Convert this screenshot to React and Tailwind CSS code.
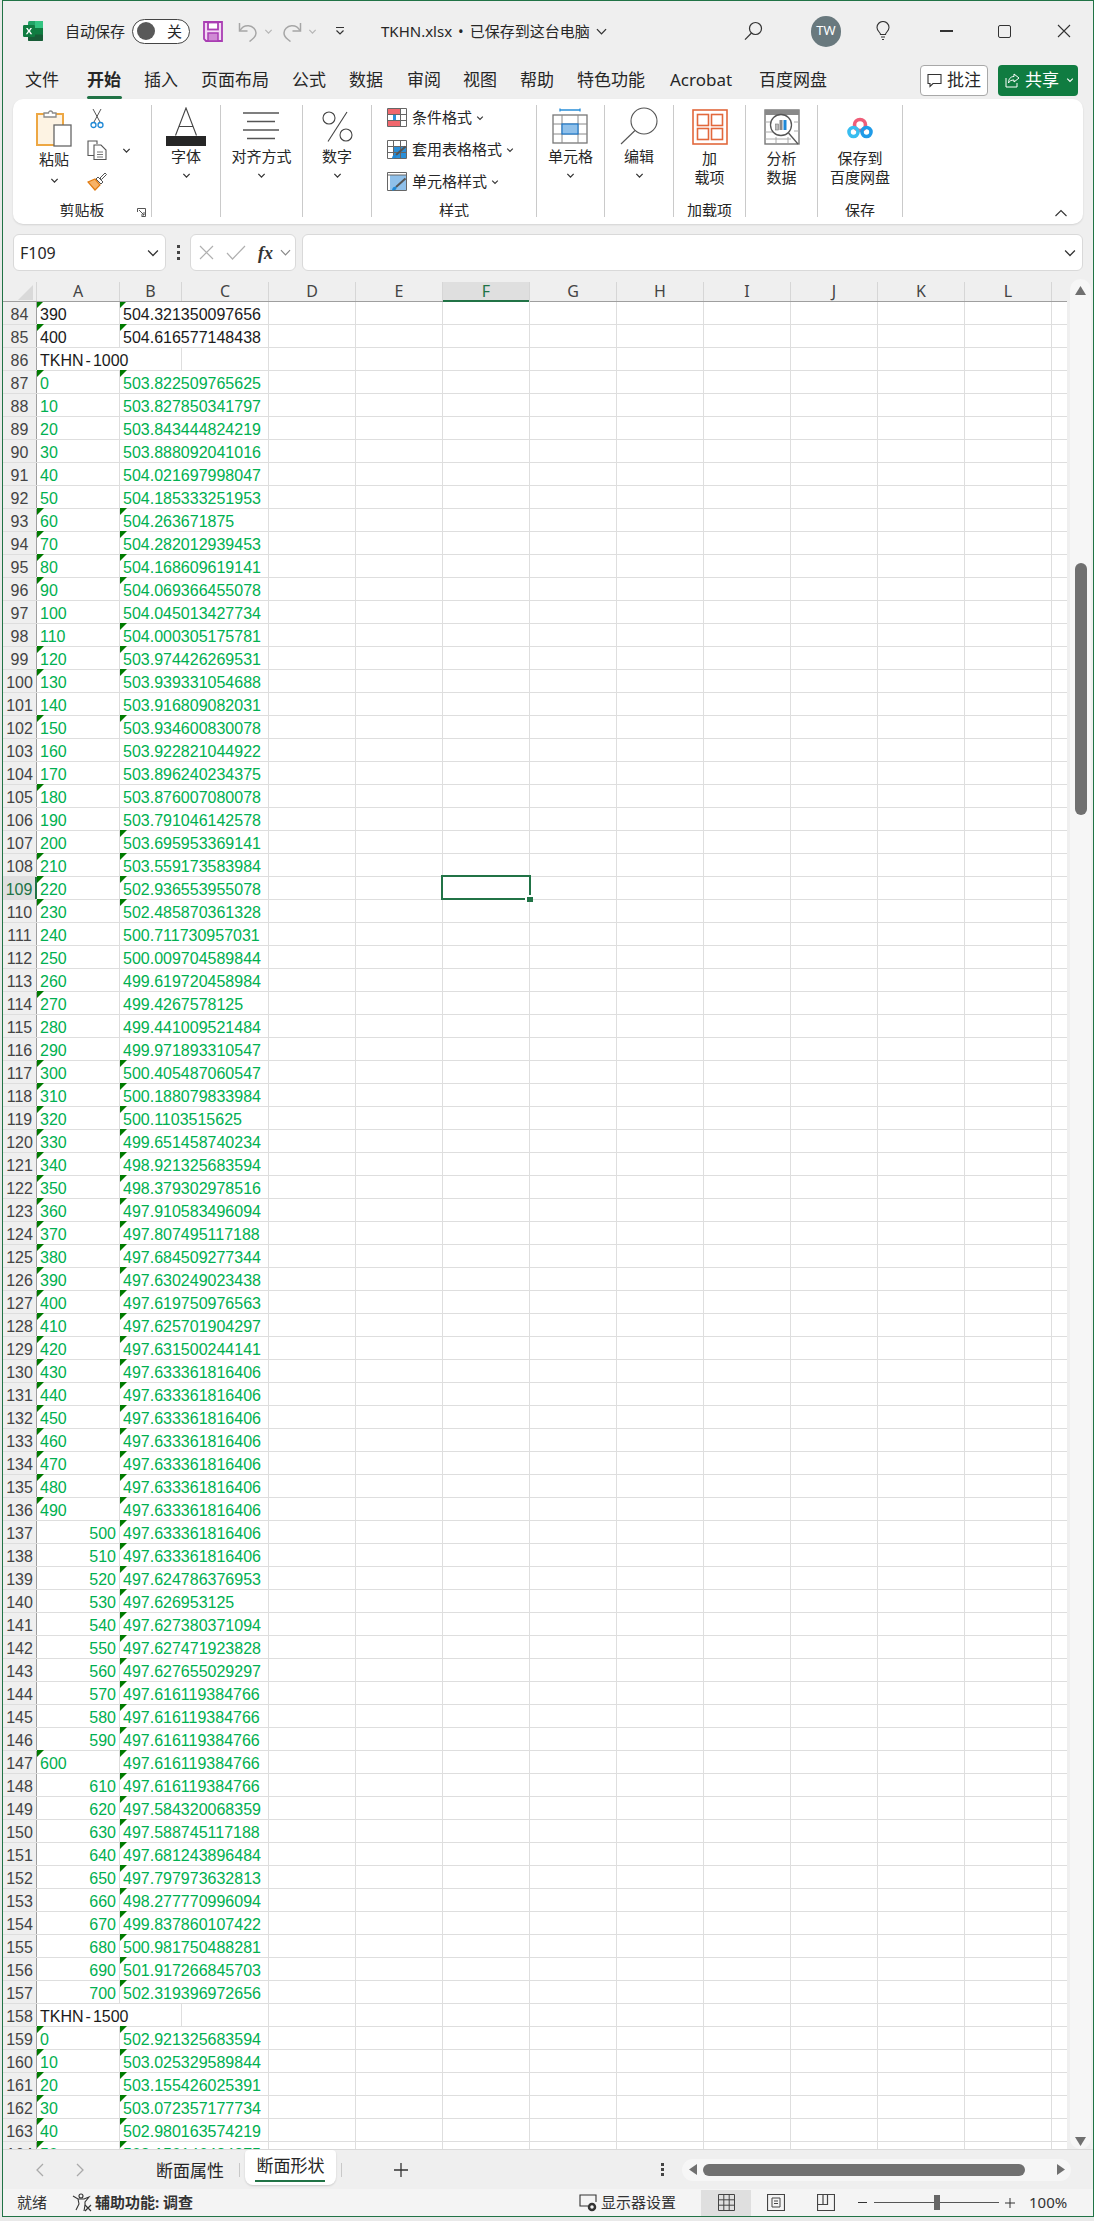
import React from "react";

const G = "497.633361816406";
const U = "497.616119384766";
// [row, A, B, flags] a/b = corner triangle in that column, r = right-aligned A
const raw = `84|390|504.321350097656|ab
85|400|504.616577148438|ab
86|T|1000|
87|0|503.822509765625|ab
88|10|503.827850341797|
89|20|503.843444824219|
90|30|503.888092041016|
91|40|504.021697998047|
92|50|504.185333251953|
93|60|504.263671875|ab
94|70|504.282012939453|ab
95|80|504.168609619141|ab
96|90|504.069366455078|ab
97|100|504.045013427734|
98|110|504.000305175781|b
99|120|503.974426269531|ab
100|130|503.939331054688|ab
101|140|503.916809082031|
102|150|503.934600830078|ab
103|160|503.922821044922|
104|170|503.896240234375|
105|180|503.876007080078|a
106|190|503.791046142578|
107|200|503.695953369141|b
108|210|503.559173583984|ab
109|220|502.936553955078|ab
110|230|502.485870361328|ab
111|240|500.711730957031|
112|250|500.009704589844|
113|260|499.619720458984|
114|270|499.4267578125|a
115|280|499.441009521484|
116|290|499.971893310547|
117|300|500.405487060547|ab
118|310|500.188079833984|ab
119|320|500.1103515625|ab
120|330|499.651458740234|ab
121|340|498.921325683594|ab
122|350|498.379302978516|ab
123|360|497.910583496094|ab
124|370|497.807495117188|ab
125|380|497.684509277344|ab
126|390|497.630249023438|ab
127|400|497.619750976563|ab
128|410|497.625701904297|ab
129|420|497.631500244141|ab
130|430|${G}|ab
131|440|${G}|ab
132|450|${G}|ab
133|460|${G}|ab
134|470|${G}|ab
135|480|${G}|ab
136|490|${G}|ab
137|500|${G}|br
138|510|${G}|br
139|520|497.624786376953|br
140|530|497.626953125|br
141|540|497.627380371094|br
142|550|497.627471923828|br
143|560|497.627655029297|br
144|570|${U}|br
145|580|${U}|br
146|590|${U}|br
147|600|${U}|ab
148|610|${U}|br
149|620|497.584320068359|br
150|630|497.588745117188|br
151|640|497.681243896484|br
152|650|497.797973632813|br
153|660|498.277770996094|br
154|670|499.837860107422|br
155|680|500.981750488281|br
156|690|501.917266845703|br
157|700|502.319396972656|br
158|T|1500|
159|0|502.921325683594|ab
160|10|503.025329589844|ab
161|20|503.155426025391|ab
162|30|503.072357177734|ab
163|40|502.980163574219|ab
164|50|503.150146484375|ab`
  .split("\n")
  .map((l) => l.split("|"));

const colLetters = ["A", "B", "C", "D", "E", "F", "G", "H", "I", "J", "K", "L"];

function Tri() {
  return <span className="absolute left-0 -top-px h-[7px] w-[7px] bg-[#007a00] [clip-path:polygon(0_0,100%_0,0_100%)]" />;
}

function EmptyCols() {
  return (
    <>
      {[0, 1, 2, 3, 4, 5, 6, 7, 8].map((i) => (
        <div key={i} className="h-full w-[87px] shrink-0 border-r border-[#dedede]" />
      ))}
      <div className="h-full w-[15px] shrink-0" />
    </>
  );
}

function Row({ r }) {
  const [n, a, b, f] = r;
  const sel = n === "109";
  const head = (
    <div
      className={
        "flex h-full w-[34px] shrink-0 items-center justify-center pt-[4px] " +
        (sel ? "border-r-2 border-r-[#217346] bg-[#dfdfdf] text-[#217346]" : "border-r border-[#9f9f9f] bg-[#efefef] text-[#444444]")
      }
    >
      {n}
    </div>
  );
  if (a === "T") {
    return (
      <div className="flex h-[23px] shrink-0 border-b border-[#dedede] leading-[26px] text-[#1a1a1a]">
        {head}
        <div className="h-full w-[83px] shrink-0 whitespace-nowrap pl-[3px]">
          TKHN<span className="px-[2px]">-</span>{b}
        </div>
        <div className="h-full w-[62px] shrink-0 border-r border-[#dedede]" />
        <div className="h-full w-[87px] shrink-0 border-r border-[#dedede]" />
        <EmptyCols />
      </div>
    );
  }
  const dark = n === "84" || n === "85";
  const color = dark ? "text-[#1a1a1a]" : "text-[#00b050]";
  const right = f.includes("r");
  return (
    <div className={"flex h-[23px] shrink-0 border-b border-[#dedede] leading-[26px] " + color}>
      {head}
      <div className={"relative h-full w-[83px] shrink-0 border-r border-[#dedede] px-[3px] " + (right ? "text-right" : "")}>
        {f.includes("a") && <Tri />}
        {a}
      </div>
      <div className="relative h-full w-[149px] shrink-0 whitespace-nowrap border-r border-[#dedede] pl-[3px]">
        {f.includes("b") && <Tri />}
        {b}
      </div>
      <EmptyCols />
    </div>
  );
}

function Chev({ x = 9, cls = "", color = "#444", sw = 1.3 }) {
  return (
    <svg width={x} height={x} viewBox="0 0 10 10" className={"shrink-0 " + cls}>
      <path d="M1.5 3.2 5 6.8l3.5-3.6" fill="none" stroke={color} strokeWidth={sw} />
    </svg>
  );
}

function ExcelLogo() {
  return (
    <svg width="20" height="20" viewBox="0 0 20 20" className="shrink-0">
      <rect x="5" width="15" height="20" rx="1.5" fill="#21a366" />
      <rect x="12" width="8" height="7" fill="#33c481" />
      <rect x="5" y="13" width="15" height="7" rx="1" fill="#185c37" />
      <rect x="12" y="7" width="8" height="6.5" fill="#107c41" />
      <rect y="4" width="12" height="12" rx="1.2" fill="#107c41" />
      <path d="M3 7l2 3-2.2 3.2h1.6L6 11l1.500 2.200h1.700L7 10l2-3H7.400L6 9.100 4.600 7z" fill="#fff" />
    </svg>
  );
}

function SaveIcon() {
  return (
    <svg width="20" height="21" viewBox="0 0 20 21" className="shrink-0">
      <path d="M1 1h18v19H3l-2-2z" fill="#f3d9f5" stroke="#a93db3" strokeWidth="1.800" />
      <rect x="5" y="1.500" width="10" height="7" fill="#fff" stroke="#a93db3" strokeWidth="1.800" />
      <rect x="5" y="12" width="10" height="8" fill="#cf8ad4" stroke="#a93db3" strokeWidth="1.500" />
    </svg>
  );
}

function Undo({ flip }) {
  return (
    <svg width="20" height="21" viewBox="0 0 20 21" className={"shrink-0 " + (flip ? "-scale-x-100" : "")}>
      <path d="M1.500 2v8h8" fill="none" stroke="#a6a6a6" strokeWidth="1.500" />
      <path d="M2 9.500C4 6 7 4.500 10.500 4.800c4.500.4 7.500 3.700 7.500 7.200 0 3-2 5-4 6.500L11.500 20.500" fill="none" stroke="#a6a6a6" strokeWidth="1.500" />
    </svg>
  );
}

function TitleBar() {
  return (
    <div className="flex h-[60px] shrink-0 items-center text-[15px] text-[#262626]">
      <div className="ml-[20px]"><ExcelLogo /></div>
      <span className="ml-[22px] w-[60px] whitespace-nowrap">自动保存</span>
      <div className="ml-[7px] flex h-[25px] w-[58px] shrink-0 items-center rounded-full border border-[#444] bg-white pl-[4px]">
        <span className="h-[18px] w-[18px] rounded-full bg-[#595959]" />
        <span className="ml-[12px] leading-none">关</span>
      </div>
      <div className="ml-[13px]"><SaveIcon /></div>
      <div className="ml-[15px]"><Undo /></div>
      <Chev cls="ml-[6px]" color="#b5b5b5" />
      <div className="ml-[9px]"><Undo flip /></div>
      <Chev cls="ml-[6px]" color="#b5b5b5" />
      <svg width="10" height="10" viewBox="0 0 10 10" className="ml-[18px] shrink-0">
        <path d="M1 1.500h8M1.500 4.500 5 8l3.500-3.500" fill="none" stroke="#333" strokeWidth="1.200" />
      </svg>
      <span className="ml-[36px] flex w-[211px] items-center whitespace-nowrap">
        TKHN.xlsx<span className="mx-[6px]">•</span>已保存到这台电脑
      </span>
      <Chev x={13} cls="ml-[3px]" color="#333" sw={1} />
      <svg width="19" height="20" viewBox="0 0 19 20" className="ml-[136px] shrink-0">
        <circle cx="11.500" cy="7.500" r="6" fill="none" stroke="#333" strokeWidth="1.200" />
        <path d="M7.500 12 1 18.700" stroke="#333" strokeWidth="1.200" />
      </svg>
      <div className="ml-[48px] flex h-[31px] w-[30px] shrink-0 items-center justify-center rounded-full bg-[#69797e] text-[13px] text-white">TW</div>
      <svg width="14" height="20" viewBox="0 0 14 20" className="ml-[35px] shrink-0">
        <path d="M4.500 13.500c0-2-3.500-3.500-3.500-7a6 6 0 0 1 12 0c0 3.500-3.500 5-3.500 7z" fill="none" stroke="#333" strokeWidth="1.100" />
        <path d="M5 16h4M6 18.500h2" stroke="#333" strokeWidth="1.200" />
      </svg>
      <div className="ml-[50px] h-[1.500px] w-[13px] shrink-0 bg-[#333]" />
      <div className="ml-[45px] h-[13px] w-[13px] shrink-0 rounded-[2px] border border-[#333]" />
      <svg width="14" height="14" viewBox="0 0 14 14" className="ml-[46px] shrink-0">
        <path d="M1 1l12 12M13 1 1 13" stroke="#333" strokeWidth="1.100" />
      </svg>
    </div>
  );
}

function TabsRow() {
  return (
    <div className="flex h-[38px] shrink-0 items-center text-[17px] text-[#262626]">
      <span className="ml-[22px] w-[34px] whitespace-nowrap">文件</span>
      <span className="relative ml-[28px] w-[34px] whitespace-nowrap font-bold">
        开始
        <span className="absolute -bottom-[6px] left-0 h-[3px] w-[35px] rounded-full bg-[#217346]" />
      </span>
      <span className="ml-[23px] w-[34px] whitespace-nowrap">插入</span>
      <span className="ml-[23px] w-[68px] whitespace-nowrap">页面布局</span>
      <span className="ml-[23px] w-[34px] whitespace-nowrap">公式</span>
      <span className="ml-[23px] w-[34px] whitespace-nowrap">数据</span>
      <span className="ml-[24px] w-[34px] whitespace-nowrap">审阅</span>
      <span className="ml-[22px] w-[34px] whitespace-nowrap">视图</span>
      <span className="ml-[23px] w-[34px] whitespace-nowrap">帮助</span>
      <span className="ml-[23px] w-[68px] whitespace-nowrap">特色功能</span>
      <span className="ml-[25px] w-[64px] whitespace-nowrap">Acrobat</span>
      <span className="ml-[25px] w-[68px] whitespace-nowrap">百度网盘</span>
      <div className="ml-[93px] flex h-[31px] w-[68px] shrink-0 items-center justify-center gap-[5px] rounded-[4px] border border-[#a8a8a8] bg-white text-[17px]">
        <svg width="15" height="15" viewBox="0 0 15 15" className="shrink-0">
          <path d="M1 1.500h13v9H6l-3 3v-3H1z" fill="none" stroke="#333" strokeWidth="1.100" />
        </svg>
        批注
      </div>
      <div className="ml-[10px] flex h-[31px] w-[80px] shrink-0 items-center rounded-[4px] bg-[#107c41] pl-[7px] text-[17px] text-white">
        <svg width="15" height="15" viewBox="0 0 15 15" className="shrink-0">
          <path d="M9 1l5 4-5 4V7C6 7 4.500 8 3.500 10 3.500 6 5.500 3.500 9 3.500zM1 5v9h11v-4" fill="none" stroke="#fff" strokeWidth="1" />
        </svg>
        <span className="ml-[5px]">共享</span>
        <Chev cls="ml-[7px]" color="#fff" x={8} />
      </div>
    </div>
  );
}

function Group({ w, label, children, launcher, noBorder }) {
  return (
    <div className={"relative flex h-[112px] shrink-0 flex-col overflow-hidden " + (noBorder ? "" : "border-r border-[#cacaca]") + " " + w}>
      <div className="flex h-[97px] shrink-0 justify-center">{children}</div>
      <div className="h-[16px] shrink-0 text-center text-[15px] leading-[16px]">{label}</div>
      {launcher && (
        <svg width="9" height="9" viewBox="0 0 9 9" className="absolute bottom-0 right-[5px]">
          <path d="M.5 4V.5H8.500V8.500H4.500M2 2l5 5M4 7h3V4" fill="none" stroke="#555" strokeWidth="1" />
        </svg>
      )}
    </div>
  );
}

function Big({ icon, label, h = "h-[42px]", chevron }) {
  return (
    <div className="flex flex-col items-center text-[15px] leading-[19px]">
      <div className={"flex shrink-0 items-center justify-center " + h}>{icon}</div>
      {label}
      {chevron && <Chev cls="mt-[5px]" color="#333" sw={1.400} />}
    </div>
  );
}

function PasteIcon() {
  return (
    <svg width="36" height="38" viewBox="0 0 36 38">
      <rect x="1" y="5" width="26" height="31" fill="#fdf3e3" stroke="#eda743" strokeWidth="2" />
      <path d="M8 8V4h4.500a2 2 0 0 1 4 0H20v4z" fill="#fff" stroke="#8a8a8a" strokeWidth="1.300" />
      <rect x="18" y="16" width="17" height="21" fill="#fff" stroke="#666" strokeWidth="1.300" />
    </svg>
  );
}

function Scissors() {
  return (
    <svg width="14" height="21" viewBox="0 0 14 21">
      <path d="M4 14 11 1M10 14 3 1" stroke="#555" strokeWidth="1" />
      <circle cx="3.500" cy="17" r="2.500" fill="none" stroke="#1e88d6" strokeWidth="1.300" />
      <circle cx="10.500" cy="17" r="2.500" fill="none" stroke="#1e88d6" strokeWidth="1.300" />
    </svg>
  );
}

function CopyIcon() {
  return (
    <svg width="20" height="20" viewBox="0 0 20 20">
      <path d="M7 15.500H1V1h9v3" fill="#fff" stroke="#555" strokeWidth="1.100" />
      <path d="M7 5h7l5 5v9.500H7z" fill="#fff" stroke="#555" strokeWidth="1.100" />
      <path d="M10 12h6M10 14.500h6M10 17h6" stroke="#777" strokeWidth="1" />
    </svg>
  );
}

function BrushIcon() {
  return (
    <svg width="20" height="20" viewBox="0 0 20 20">
      <path d="M1 11l7-3 5 6-5 5z" fill="#f7b267" stroke="#e07a10" strokeWidth="1.200" />
      <path d="M9 8l5 5 2-2-5-5z" fill="#fff" stroke="#555" strokeWidth="1" />
      <path d="M13 7l5-5 1.500 1.500-5 5z" fill="#fff" stroke="#555" strokeWidth="1" />
    </svg>
  );
}

function SmallGridIcon({ kind }) {
  const lines = (
    <path d="M.500.500h19v18H.500zM.500 6.500h19M.500 12.500h19M6.500.500v18M13.500.500v18" fill="none" stroke="#666" strokeWidth="1" />
  );
  if (kind === "cond") {
    return (
      <svg width="20" height="19" viewBox="0 0 20 19" className="shrink-0">
        {lines}
        <rect x="1" y="1" width="12" height="5" fill="#f0676d" />
        <rect x="6" y="7" width="3" height="5" fill="#2a8fd8" />
        <rect x="1" y="13" width="12" height="5" fill="#f0676d" />
      </svg>
    );
  }
  return (
    <svg width="20" height="19" viewBox="0 0 20 19" className="shrink-0">
      {kind === "table" ? <rect x="7" y="7" width="12" height="11" fill="#2a8fd8" /> : <rect x="3" y="3" width="16" height="15" fill="#8fc0ea" />}
      {kind === "table" ? lines : <path d="M.500.500h19v18H.500zM.500 3h19" fill="none" stroke="#666" strokeWidth="1" />}
      <path d="M18.500 6.500 9 15" stroke="#555" strokeWidth="2" />
      <path d="M5 18.500c0-3 2-4.500 4.500-3.500.5 2.500-1.500 3.500-4.500 3.500z" fill="#1e88d6" />
    </svg>
  );
}

function StyleRow({ kind, text, w, mt }) {
  return (
    <div className={"flex h-[19px] items-center " + mt}>
      <SmallGridIcon kind={kind} />
      <span className={"ml-[5px] whitespace-nowrap text-[15px] " + w}>{text}</span>
      <Chev x={8} cls="ml-[4px]" color="#333" sw={1.400} />
    </div>
  );
}

function Ribbon() {
  return (
    <div className="ml-[10px] flex h-[125px] w-[1070px] shrink-0 rounded-[10px] bg-white py-[6px] text-[#262626] shadow-[0_1px_2px_rgba(0,0,0,0.12)]">
      <Group w="w-[139px]" label="剪贴板" launcher>
        <div className="ml-[14px] flex w-[54px] shrink-0 flex-col items-center pt-[4px] text-[15px] leading-[19px]">
          <PasteIcon />
          <span className="mt-[3px]">粘贴</span>
          <Chev cls="mt-[7px]" color="#333" sw={1.400} />
        </div>
        <div className="ml-[6px] flex w-[20px] shrink-0 flex-col items-center pt-[3px]">
          <Scissors />
          <div className="mt-[11px]"><CopyIcon /></div>
          <div className="mt-[11px]"><BrushIcon /></div>
        </div>
        <div className="ml-[15px] mr-auto pt-[41px]"><Chev color="#333" sw={1.400} /></div>
      </Group>
      <Group w="w-[69px]">
        <Big
          icon={
            <div className="flex flex-col items-center">
              <svg width="24" height="29" viewBox="0 0 24 29"><path d="M1.500 28.500 12 1l10.500 27.500M5 19.500h14" fill="none" stroke="#444" strokeWidth="1.100" /></svg>
              <div className="h-[10px] w-[40px] bg-[#262626]" />
            </div>
          }
          label="字体"
          chevron
        />
      </Group>
      <Group w="w-[82px]">
        <Big
          icon={
            <svg width="36" height="28" viewBox="0 0 36 28"><path d="M0 1h36M4 9.500h28M0 18h36M4 26.500h28" stroke="#555" strokeWidth="1.300" /></svg>
          }
          label="对齐方式"
          chevron
        />
      </Group>
      <Group w="w-[69px]">
        <Big
          icon={
            <svg width="31" height="31" viewBox="0 0 31 31">
              <circle cx="7" cy="7" r="6" fill="none" stroke="#444" strokeWidth="1.100" />
              <circle cx="24" cy="24" r="6" fill="none" stroke="#444" strokeWidth="1.100" />
              <path d="M25 1 6 30.500" stroke="#444" strokeWidth="1.100" />
            </svg>
          }
          label="数字"
          chevron
        />
      </Group>
      <Group w="w-[165px]" label="样式">
        <div className="mr-auto flex flex-col pl-[15px] pt-[3px]">
          <StyleRow kind="cond" text="条件格式" w="w-[60px]" />
          <StyleRow kind="table" text="套用表格格式" w="w-[90px]" mt="mt-[13px]" />
          <StyleRow kind="cell" text="单元格样式" w="w-[75px]" mt="mt-[13px]" />
        </div>
      </Group>
      <Group w="w-[68px]">
        <Big
          icon={
            <svg width="36" height="36" viewBox="0 0 36 36">
              <path d="M8 2h20M8 .5v3M28 .5v3" stroke="#2a8fd8" strokeWidth="1.300" />
              <rect x="1" y="7" width="34" height="28" fill="#fff" stroke="#777" strokeWidth="1.300" />
              <path d="M1 16h34M1 26h34M10 7v28M26 7v28" stroke="#888" strokeWidth="1" />
              <rect x="10" y="16" width="16" height="10" fill="#8fc0ea" stroke="#1e78c8" strokeWidth="1.200" />
            </svg>
          }
          label="单元格"
          chevron
        />
      </Group>
      <Group w="w-[69px]">
        <Big
          icon={
            <svg width="38" height="38" viewBox="0 0 38 38">
              <circle cx="24" cy="14" r="13" fill="none" stroke="#555" strokeWidth="1.100" />
              <path d="M15 23.500 1 37" stroke="#555" strokeWidth="1.100" />
            </svg>
          }
          label="编辑"
          chevron
        />
      </Group>
      <Group w="w-[72px]" label="加载项">
        <Big
          h="h-[44px]"
          icon={
            <svg width="36" height="36" viewBox="0 0 36 36">
              <rect x="1" y="1" width="34" height="34" fill="#fff" stroke="#e2683c" strokeWidth="1.600" />
              <rect x="5.500" y="5.500" width="11" height="11" fill="none" stroke="#e2683c" strokeWidth="1.600" />
              <rect x="19.500" y="5.500" width="11" height="11" fill="none" stroke="#e2683c" strokeWidth="1.600" />
              <rect x="5.500" y="19.500" width="11" height="11" fill="none" stroke="#e2683c" strokeWidth="1.600" />
              <rect x="19.500" y="19.500" width="11" height="11" fill="none" stroke="#e2683c" strokeWidth="1.600" />
            </svg>
          }
          label={<span className="text-center">加<br />载项</span>}
        />
      </Group>
      <Group w="w-[72px]">
        <Big
          h="h-[44px]"
          icon={
            <svg width="36" height="36" viewBox="0 0 36 36">
              <rect x="1" y="1" width="34" height="34" fill="#fff" stroke="#777" strokeWidth="1.400" />
              <rect x="1" y="1" width="34" height="5" fill="#888" />
              <path d="M1 13h6M1 23h8M1 30h26M12 28v6M24 28v6M30 13h5M30 22h5" stroke="#aaa" strokeWidth="1" />
              <circle cx="17" cy="16" r="10.500" fill="#fff" stroke="#555" strokeWidth="1.300" />
              <rect x="11.500" y="15" width="3" height="6" fill="#bbb" stroke="#777" strokeWidth=".6" />
              <rect x="15.500" y="11" width="3" height="10" fill="#888" />
              <rect x="19.500" y="11" width="3" height="10" fill="#1e88d6" />
              <path d="M24.500 24 34 35" stroke="#555" strokeWidth="1.300" />
            </svg>
          }
          label={<span className="text-center">分析<br />数据</span>}
        />
      </Group>
      <Group w="w-[85px]" label="保存">
        <Big
          h="h-[44px]"
          icon={
            <svg width="26" height="22" viewBox="0 0 26 22" className="mt-[1px]">
              <circle cx="13" cy="8" r="5.500" fill="none" stroke="#ef5d78" strokeWidth="3.600" />
              <circle cx="6.500" cy="15" r="4.500" fill="none" stroke="#38bdf0" strokeWidth="3.600" />
              <circle cx="19.500" cy="15" r="4.500" fill="none" stroke="#1f9be8" strokeWidth="3.600" />
            </svg>
          }
          label={<span className="whitespace-nowrap text-center">保存到<br />百度网盘</span>}
        />
      </Group>
      <div className="flex flex-1 items-end justify-end pb-[1px] pr-[16px]">
        <svg width="12" height="8" viewBox="0 0 12 8"><path d="M.5 7 6 1.500 11.500 7" fill="none" stroke="#333" strokeWidth="1.100" /></svg>
      </div>
    </div>
  );
}

function FormulaBar() {
  const box = "flex h-[37px] shrink-0 items-center rounded-[6px] border border-[#d9d9d9] bg-white";
  return (
    <div className="ml-[10px] mt-[10px] flex h-[37px] w-[1070px] shrink-0 items-center">
      <div className={box + " w-[153px] pl-[6px] text-[16px] text-[#262626]"}>
        <span className="flex-1">F109</span>
        <Chev x={14} cls="mr-[5px]" color="#333" sw={.9} />
      </div>
      <div className="ml-[11px] flex w-[4px] shrink-0 flex-col gap-[3px]">
        <span className="h-[3px] w-[3px] bg-[#444]" />
        <span className="h-[3px] w-[3px] bg-[#444]" />
        <span className="h-[3px] w-[3px] bg-[#444]" />
      </div>
      <div className={box + " ml-[9px] w-[106px]"}>
        <svg width="15" height="15" viewBox="0 0 15 15" className="ml-[8px] shrink-0"><path d="M1 1l13 13M14 1 1 14" stroke="#b0b0b0" strokeWidth="1.200" /></svg>
        <svg width="20" height="15" viewBox="0 0 20 15" className="ml-[12px] shrink-0"><path d="M1 8l5.500 6L19 1" fill="none" stroke="#b0b0b0" strokeWidth="1.200" /></svg>
        <span className="ml-[12px] font-['Liberation_Serif',serif] text-[18px] font-bold italic leading-none text-[#333]">fx</span>
        <Chev x={13} cls="ml-[6px]" color="#888" sw={.9} />
      </div>
      <div className={box + " ml-[6px] flex-1 justify-end"}>
        <Chev x={14} cls="mr-[5px]" color="#333" sw={.9} />
      </div>
    </div>
  );
}

function ColHeader() {
  const widths = { A: "w-[83px]", B: "w-[62px]" };
  return (
    <div className="flex h-[20px] shrink-0 border-b border-[#9f9f9f] bg-[#efefef] leading-[19px] text-[#444444]">
      <div className="flex h-full w-[34px] shrink-0 items-end justify-end border-r border-[#d6d6d6] pb-[1px] pr-[3px]">
        <svg width="15" height="15" viewBox="0 0 15 15"><path d="M15 0v15H0z" fill="#d9d9d9" /></svg>
      </div>
      {colLetters.map((c) => (
        <div
          key={c}
          className={
            "shrink-0 border-r border-[#d6d6d6] text-center " +
            (widths[c] || "w-[87px]") +
            (c === "F" ? " h-[20px] bg-[#dfdfdf] text-[#217346] shadow-[inset_0_-2px_0_#217346]" : " h-full")
          }
        >
          {c}
        </div>
      ))}
      <div className="h-full w-[15px] shrink-0" />
    </div>
  );
}

function Grid() {
  return (
    <div className="relative h-[1847px] shrink-0 overflow-hidden bg-white font-['Liberation_Sans','Noto_Sans_CJK_SC',sans-serif] text-[16px]">
      <div className="flex flex-col">
        {raw.map((r) => (
          <Row key={r[0]} r={r} />
        ))}
      </div>
      {/* selected cell F109 */}
      <div className="absolute left-[438px] top-[573px] h-[25px] w-[90px] border-2 border-[#217346]" />
      <div className="absolute left-[522px] top-[593px] h-[7px] w-[8px] border-l-2 border-t-2 border-white bg-[#217346]" />
    </div>
  );
}

function VScroll() {
  return (
    <div className="ml-[3px] flex h-[1870px] w-[21px] shrink-0 -translate-y-[3px] flex-col items-center rounded-full bg-[#f6f6f6] pt-[6px]">
      <svg width="11" height="9" viewBox="0 0 11 9" className="mt-[1px] shrink-0"><path d="M5.500 0 11 9H0z" fill="#707070" /></svg>
      <div className="mt-[268px] h-[252px] w-[12px] shrink-0 rounded-full bg-[#707070]" />
      <svg width="11" height="9" viewBox="0 0 11 9" className="mt-auto mb-[3px] shrink-0"><path d="M5.500 9 11 0H0z" fill="#707070" /></svg>
    </div>
  );
}

function SheetTabs() {
  return (
    <div className="flex h-[40px] shrink-0 items-center border-t border-[#d9d9d9] bg-[#efefef] text-[17px] text-[#262626]">
      <svg width="9" height="14" viewBox="0 0 9 14" className="ml-[32px] shrink-0"><path d="M8 1 2 7l6 6" fill="none" stroke="#aaa" strokeWidth="1.300" /></svg>
      <svg width="9" height="14" viewBox="0 0 9 14" className="ml-[32px] shrink-0"><path d="M1 1l6 6-6 6" fill="none" stroke="#aaa" strokeWidth="1.300" /></svg>
      <span className="ml-[71px] mt-[3px] w-[70px] whitespace-nowrap">断面属性</span>
      <span className="ml-[13px] h-[14px] w-px shrink-0 bg-[#c8c8c8]" />
      <div className="relative ml-[5px] flex h-[35px] w-[91px] shrink-0 -translate-y-[2px] justify-center rounded-b-[8px] rounded-t-[4px] bg-white pt-[4px] leading-[24px] shadow-[0_1px_2px_rgba(0,0,0,0.15)]">
        断面形状
        <span className="absolute bottom-[3px] left-[10px] h-[2px] w-[70px] bg-[#217346]" />
      </div>
      <span className="ml-[5px] h-[14px] w-px shrink-0 bg-[#c8c8c8]" />
      <svg width="14" height="14" viewBox="0 0 14 14" className="ml-[52px] shrink-0"><path d="M7 0v14M0 7h14" stroke="#333" strokeWidth="1.300" /></svg>
      <div className="ml-[253px] flex w-[3px] shrink-0 flex-col gap-[2px]">
        <span className="h-[3px] w-[3px] bg-[#444]" />
        <span className="h-[3px] w-[3px] bg-[#444]" />
        <span className="h-[3px] w-[3px] bg-[#444]" />
      </div>
      <div className="ml-[18px] flex h-[22px] w-[389px] shrink-0 items-center rounded-full bg-[#f6f6f6] pl-[7px]">
        <svg width="8" height="11" viewBox="0 0 8 11" className="shrink-0"><path d="M0 5.500 8 0v11z" fill="#707070" /></svg>
        <div className="ml-[6px] h-[12px] w-[322px] shrink-0 rounded-full bg-[#707070]" />
        <svg width="8" height="11" viewBox="0 0 8 11" className="ml-[32px] shrink-0"><path d="M8 5.500 0 0v11z" fill="#707070" /></svg>
      </div>
    </div>
  );
}

function StatusBar() {
  return (
    <div className="flex h-[27px] shrink-0 items-center bg-[#f4f4f4] text-[15px] text-[#333]">
      <span className="ml-[14px] w-[30px] whitespace-nowrap">就绪</span>
      <svg width="20" height="19" viewBox="0 0 20 19" className="ml-[25px] shrink-0">
        <circle cx="9" cy="3" r="2" fill="none" stroke="#333" strokeWidth="1.100" />
        <path d="M1 3l5 3h6l5-2-4 5v3l-1 6M6 6l1 5-3 6" fill="none" stroke="#333" strokeWidth="1.100" />
        <path d="M13 12l6 6M19 12l-6 6" stroke="#333" strokeWidth="1.200" />
      </svg>
      <span className="ml-[3px] w-[100px] whitespace-nowrap font-bold">辅助功能: 调查</span>
      <svg width="20" height="18" viewBox="0 0 20 18" className="ml-[384px] shrink-0">
        <path d="M9 12H1V1h16v7" fill="none" stroke="#333" strokeWidth="1.100" />
        <circle cx="13" cy="13" r="3" fill="none" stroke="#333" strokeWidth="2.500" />
      </svg>
      <span className="ml-[2px] w-[75px] whitespace-nowrap">显示器设置</span>
      <div className="ml-[25px] flex h-[26px] w-[50px] shrink-0 items-center justify-center bg-[#dfdfdf]">
        <svg width="17" height="17" viewBox="0 0 17 17"><path d="M.5.5h16v16H.5zM.5 5.800h16M.5 11.200h16M5.800.5v16M11.200.5v16" fill="none" stroke="#444" strokeWidth="1" /></svg>
      </div>
      <svg width="18" height="17" viewBox="0 0 18 17" className="ml-[16px] shrink-0"><path d="M.5.5h17v16H.5z" fill="none" stroke="#444" strokeWidth="1.200" /><path d="M5 4h8v9H5zM7 7h4M7 9.500h4" fill="none" stroke="#444" strokeWidth="1" /></svg>
      <svg width="18" height="17" viewBox="0 0 18 17" className="ml-[32px] shrink-0"><path d="M.5.5h17v16H.5zM.5 10.500h10v-10M6 .5v10" fill="none" stroke="#444" strokeWidth="1.200" /></svg>
      <span className="ml-[23px] h-px w-[9px] shrink-0 bg-[#333]" />
      <div className="relative ml-[7px] h-px w-[125px] shrink-0 bg-[#555]">
        <span className="absolute -top-[7px] left-[60px] h-[15px] w-[6px] bg-[#666]" />
      </div>
      <svg width="10" height="10" viewBox="0 0 10 10" className="ml-[6px] shrink-0"><path d="M5 0v10M0 5h10" stroke="#333" strokeWidth="1" /></svg>
      <span className="ml-[14px] whitespace-nowrap">100%</span>
    </div>
  );
}

export default function App() {
  return (
    <div className="h-[2221px] w-[1094px] overflow-hidden bg-[#e9e9e9] pl-[2px] font-['Noto_Sans','Noto_Sans_CJK_SC',sans-serif]">
      <div className="flex h-[2217px] w-[1092px] flex-col overflow-hidden border border-[#217346] bg-[#efefef]">
        <TitleBar />
        <TabsRow />
        <Ribbon />
        <FormulaBar />
        <div className="mt-[11px] flex h-[1867px] shrink-0">
          <div className="flex w-[1064px] shrink-0 flex-col">
            <ColHeader />
            <Grid />
          </div>
          <VScroll />
        </div>
        <SheetTabs />
        <StatusBar />
      </div>
    </div>
  );
}
